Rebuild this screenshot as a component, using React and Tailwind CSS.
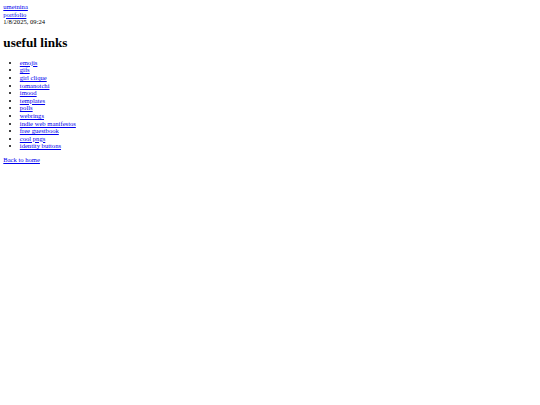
import React from 'react';

const links = [
  'emojis',
  'gifs',
  'girl clique',
  'tomanotchi',
  'imood',
  'templates',
  'polls',
  'webrings',
  'indie web manifestos',
  'free guestbook',
  'cool pngs',
  'identity buttons',
];

const App = () => {
  return (
    <div className="min-h-screen bg-white p-[3.3px] font-['Liberation_Serif',serif] text-[6.6px] leading-[1.15] text-black">
      <div>
        <a href="#" className="text-[#0000ee] underline">umetnina</a>
      </div>
      <div>
        <a href="#" className="text-[#0000ee] underline">portfolio</a>
      </div>
      <div>1/8/2025, 09:24</div>

      <h1 className="my-[0.67em] text-[2em] font-bold leading-[1.15]">useful links</h1>

      <ul className="my-[1em] list-disc pl-[2.5em]">
        {links.map((l) => (
          <li key={l}>
            <a href="#" className="text-[#0000ee] underline">{l}</a>
          </li>
        ))}
      </ul>

      <p className="my-[1em]">
        <a href="#" className="text-[#0000ee] underline">Back to home</a>
      </p>
    </div>
  );
};

export default App;
